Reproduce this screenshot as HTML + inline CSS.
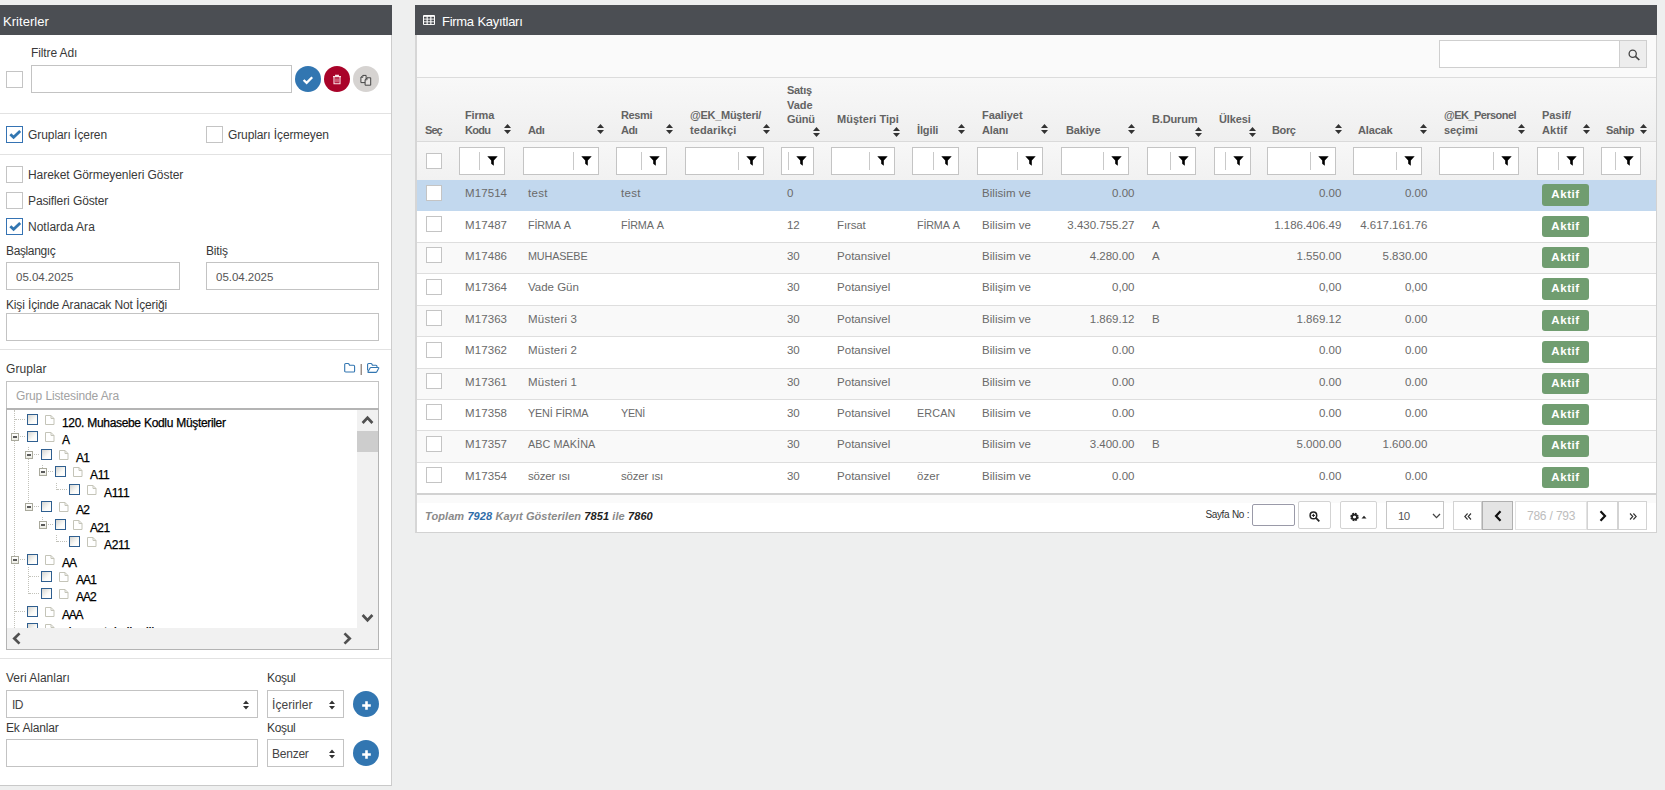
<!DOCTYPE html><html lang="tr"><head><meta charset="utf-8"><title>Firma Kayıtları</title><style>
*{box-sizing:border-box;margin:0;padding:0}
html,body{width:1665px;height:790px;overflow:hidden}
body{background:#eeefef;font-family:"Liberation Sans",sans-serif;font-size:12px;color:#393939;position:relative}
.abs{position:absolute}
.t{position:absolute;white-space:nowrap;line-height:16px;font-size:12px;color:#393939}
.panel{position:absolute;background:#fff}
.hdr{position:absolute;background:#4b4e53;height:30px;color:#fff}
.inp{position:absolute;background:#fff;border:1px solid #c3c3c3}
.cb{position:absolute;width:17px;height:17px;background:#fff;border:1px solid #c4c4c4}
.cb.s{width:16px;height:16px}
.cb.on{border-color:#3573b3;height:16.500px}
.hr{position:absolute;height:1px;background:#e2e2e2}
.circ{position:absolute;width:26px;height:26px;border-radius:13px}
.th{position:absolute;white-space:nowrap;font-weight:bold;font-size:11px;line-height:15px;color:#636363}
.td{position:absolute;white-space:nowrap;font-size:11.5px;line-height:16px;color:#6a6a6a}
.tdr{text-align:right}
.fb{position:absolute;height:28px;top:147px;background:#fff;border:1px solid #c4c4c4}
.fb i{position:absolute;top:4px;bottom:4px;width:1px;background:#c9c9c9;right:24px}
.fb svg{position:absolute;right:6px;top:8px}
.row{position:absolute;left:417px;width:1239px}
.akt{position:absolute;left:1542px;width:47px;height:22px;background:#709d70;border-radius:3px;color:#fff;font-weight:bold;font-size:11.500px;line-height:21.500px;text-align:center;letter-spacing:.55px}
.tree{position:absolute;white-space:nowrap;font-size:12px;line-height:14px;color:#000;-webkit-text-stroke:.25px #000}
.tcb{position:absolute;width:11px;height:11px;border:1px solid #2f5f90;background:linear-gradient(135deg,#d4d4d0,#fbfbf8 60%,#fff)}
.btn{position:absolute;background:#fff;border:1px solid #d3d3d3}
</style></head><body>
<div class="panel" style="left:0;top:5px;width:392px;height:781px;border-right:1px solid #cdcdcd;border-bottom:1px solid #c9c9c9"></div>
<div class="hdr" style="left:0;top:5px;width:392px"></div>
<div class="t" style="left:3px;top:14px;color:#fff;font-size:13px;letter-spacing:0.04px;">Kriterler</div>
<div class="t" style="left:31px;top:45px;letter-spacing:-0.12px;word-spacing:0.12px;">Filtre Adı</div>
<div class="cb" style="left:6px;top:71px"></div>
<div class="inp" style="left:31px;top:65px;width:261px;height:28px"></div>
<div class="circ" style="left:295px;top:66px;background:#3276b1"><svg class="abs" style="left:7px;top:9px" width="12" height="10" viewBox="0 0 12 10"><path d="M1.6 5 L4.6 7.8 L10.2 2.2" fill="none" stroke="#fff" stroke-width="2.3"/></svg></div>
<div class="circ" style="left:324px;top:66px;background:#a90329"><svg class="abs" style="left:8px;top:8px" width="10" height="11" viewBox="0 0 10 11"><path d="M1 2.6h8 M3.6 2.4v-1h2.8v1 M2 3.2v6.6h6v-6.6" fill="none" stroke="#fbe3e8" stroke-width="1.1"/><path d="M4 4.4v4M6 4.4v4" stroke="#f3b6c2" stroke-width="1"/></svg></div>
<div class="circ" style="left:353px;top:66px;background:#d6d3d1"><svg class="abs" style="left:7px;top:8px" width="12" height="12" viewBox="0 0 12 12"><path d="M0.9 3.400 l2-2 h3.200 v7.200 h-5.200z" fill="#e6e3e1" stroke="#444" stroke-width="1"/><path d="M5.100 5.800 l2-2 h3.600 v7.400 h-5.600z" fill="#e6e3e1" stroke="#444" stroke-width="1"/><path d="M2.900 1.400v2h-2 M7.100 3.800v2h-2" fill="none" stroke="#444" stroke-width=".8"/></svg></div>
<div class="hr" style="left:0;top:113px;width:391px"></div>
<div class="cb on" style="left:6px;top:126px"><svg class="abs" style="left:1px;top:2px" width="14" height="11" viewBox="0 0 14 11"><path d="M2.300 5.200 L5.600 8.300 L12.200 2" fill="none" stroke="#3276b1" stroke-width="2.800"/></svg></div>
<div class="t" style="left:28px;top:127px;letter-spacing:-0.07px;word-spacing:0.07px;">Grupları İçeren</div>
<div class="cb" style="left:206px;top:126px"></div>
<div class="t" style="left:228px;top:127px;letter-spacing:-0.11px;word-spacing:0.11px;">Grupları İçermeyen</div>
<div class="hr" style="left:0;top:154px;width:391px"></div>
<div class="cb" style="left:6px;top:166px"></div>
<div class="t" style="left:28px;top:167px;letter-spacing:-0.06px;word-spacing:0.06px;">Hareket Görmeyenleri Göster</div>
<div class="cb" style="left:6px;top:192px"></div>
<div class="t" style="left:28px;top:193px;letter-spacing:-0.12px;word-spacing:0.12px;">Pasifleri Göster</div>
<div class="cb on" style="left:6px;top:218px"><svg class="abs" style="left:1px;top:2px" width="14" height="11" viewBox="0 0 14 11"><path d="M2.300 5.200 L5.600 8.300 L12.200 2" fill="none" stroke="#3276b1" stroke-width="2.800"/></svg></div>
<div class="t" style="left:28px;top:219px;letter-spacing:0.01px;word-spacing:-0.01px;">Notlarda Ara</div>
<div class="t" style="left:6px;top:243px;letter-spacing:-0.37px;">Başlangıç</div>
<div class="t" style="left:206px;top:243px;letter-spacing:-0.17px;">Bitiş</div>
<div class="inp" style="left:6px;top:262px;width:174px;height:28px"></div>
<div class="t" style="left:16px;top:269px;color:#555;font-size:11.5px;letter-spacing:-0.02px;">05.04.2025</div>
<div class="inp" style="left:206px;top:262px;width:173px;height:28px"></div>
<div class="t" style="left:216px;top:269px;color:#555;font-size:11.5px;letter-spacing:-0.02px;">05.04.2025</div>
<div class="t" style="left:6px;top:297px;letter-spacing:-0.16px;word-spacing:0.16px;">Kişi İçinde Aranacak Not İçeriği</div>
<div class="inp" style="left:6px;top:313px;width:373px;height:28px"></div>
<div class="hr" style="left:0;top:349px;width:391px"></div>
<div class="t" style="left:6px;top:361px;letter-spacing:0.07px;">Gruplar</div>
<svg class="abs" style="left:344px;top:362px" width="36" height="14" viewBox="0 0 36 14"><path d="M0.7 2.6 q0-1.1 1.1-1.1 h2.2 q.8 0 1.1 .8 l.4 1 h4 q1.1 0 1.1 1.1 v4.5 q0 1.1-1.1 1.1 h-7.700 q-1.1 0-1.1-1.100z" fill="none" stroke="#3276b1" stroke-width="1.1"/><path d="M17.2 2 v11" stroke="#7a6a60" stroke-width="1.1"/><path d="M23.6 8.600 v-6 q0-1.100 1.100-1.100 h2.200 q.8 0 1.100 .8 l.4 1 h3.500 q1.100 0 1.100 1.100 v1" fill="none" stroke="#3276b1" stroke-width="1.100"/><path d="M23.900 9.800 l2.200-3.800 q.3-.5 .9-.5 h7.200 q.9 0 .5 .8 l-2 3.600 q-.3.500-.9.500 h-7.400 q-.9 0-.5-.6z" fill="none" stroke="#3276b1" stroke-width="1.100"/></svg>
<div class="inp" style="left:6px;top:381px;width:373px;height:28px"></div>
<div class="t" style="left:16px;top:388px;color:#a2a2a2;letter-spacing:-0.14px;word-spacing:0.14px;">Grup Listesinde Ara</div>
<div class="abs" style="left:6px;top:408px;width:373px;height:242px;border:1px solid #b4b4b4;border-top-width:2px;background:#fff;overflow:hidden">
<div class="abs" style="left:7px;top:0px;width:0;height:230px;border-left:1px dotted #c2c2ba"></div>
<div class="abs" style="left:21px;top:37px;width:0;height:55px;border-left:1px dotted #c2c2ba"></div>
<div class="abs" style="left:35px;top:55px;width:0;height:3px;border-left:1px dotted #c2c2ba"></div>
<div class="abs" style="left:49px;top:73px;width:0;height:7px;border-left:1px dotted #c2c2ba"></div>
<div class="abs" style="left:35px;top:107px;width:0;height:3px;border-left:1px dotted #c2c2ba"></div>
<div class="abs" style="left:49px;top:125px;width:0;height:7px;border-left:1px dotted #c2c2ba"></div>
<div class="abs" style="left:21px;top:157px;width:0;height:27px;border-left:1px dotted #c2c2ba"></div>
<div class="tcb" style="left:20px;top:4px"></div>
<svg class="abs" style="left:38px;top:5px" width="10" height="10" viewBox="0 0 10 10"><path d="M0.500 0.500 h5.500 l3 3 v6 h-8.500z" fill="#fff" stroke="#c4c4b8" stroke-width="1"/><path d="M6 0.500 v3 h3" fill="none" stroke="#c4c4b8" stroke-width="1"/></svg>
<div class="tree" style="left:55px;top:6px;letter-spacing:-0.34px;word-spacing:0.34px;">120. Muhasebe Kodlu Müşteriler</div>
<div class="abs" style="left:8px;top:9px;width:10px;height:0;border-top:1px dotted #c2c2ba"></div>
<div class="tcb" style="left:20px;top:21px"></div>
<svg class="abs" style="left:38px;top:22px" width="10" height="10" viewBox="0 0 10 10"><path d="M0.500 0.500 h5.500 l3 3 v6 h-8.500z" fill="#fff" stroke="#c4c4b8" stroke-width="1"/><path d="M6 0.500 v3 h3" fill="none" stroke="#c4c4b8" stroke-width="1"/></svg>
<div class="tree" style="left:55px;top:23px;letter-spacing:-0.62px;">A</div>
<div class="abs" style="left:4px;top:23px;width:8px;height:8px;border:1px solid #a9a99c;background:linear-gradient(#fff,#ecece4)"><div class="abs" style="left:1px;top:2px;width:4px;height:2px;background:#5a5a5a"></div></div>
<div class="abs" style="left:13px;top:26px;width:5px;height:0;border-top:1px dotted #c2c2ba"></div>
<div class="tcb" style="left:34px;top:39px"></div>
<svg class="abs" style="left:52px;top:40px" width="10" height="10" viewBox="0 0 10 10"><path d="M0.500 0.500 h5.500 l3 3 v6 h-8.500z" fill="#fff" stroke="#c4c4b8" stroke-width="1"/><path d="M6 0.500 v3 h3" fill="none" stroke="#c4c4b8" stroke-width="1"/></svg>
<div class="tree" style="left:69px;top:41px;letter-spacing:-0.84px;">A1</div>
<div class="abs" style="left:18px;top:41px;width:8px;height:8px;border:1px solid #a9a99c;background:linear-gradient(#fff,#ecece4)"><div class="abs" style="left:1px;top:2px;width:4px;height:2px;background:#5a5a5a"></div></div>
<div class="abs" style="left:27px;top:44px;width:5px;height:0;border-top:1px dotted #c2c2ba"></div>
<div class="tcb" style="left:48px;top:56px"></div>
<svg class="abs" style="left:66px;top:57px" width="10" height="10" viewBox="0 0 10 10"><path d="M0.500 0.500 h5.500 l3 3 v6 h-8.500z" fill="#fff" stroke="#c4c4b8" stroke-width="1"/><path d="M6 0.500 v3 h3" fill="none" stroke="#c4c4b8" stroke-width="1"/></svg>
<div class="tree" style="left:83px;top:58px;letter-spacing:-0.36px;">A11</div>
<div class="abs" style="left:32px;top:58px;width:8px;height:8px;border:1px solid #a9a99c;background:linear-gradient(#fff,#ecece4)"><div class="abs" style="left:1px;top:2px;width:4px;height:2px;background:#5a5a5a"></div></div>
<div class="abs" style="left:41px;top:61px;width:5px;height:0;border-top:1px dotted #c2c2ba"></div>
<div class="tcb" style="left:62px;top:74px"></div>
<svg class="abs" style="left:80px;top:75px" width="10" height="10" viewBox="0 0 10 10"><path d="M0.500 0.500 h5.500 l3 3 v6 h-8.500z" fill="#fff" stroke="#c4c4b8" stroke-width="1"/><path d="M6 0.500 v3 h3" fill="none" stroke="#c4c4b8" stroke-width="1"/></svg>
<div class="tree" style="left:97px;top:76px;letter-spacing:-0.21px;">A111</div>
<div class="abs" style="left:50px;top:79px;width:10px;height:0;border-top:1px dotted #c2c2ba"></div>
<div class="tcb" style="left:34px;top:91px"></div>
<svg class="abs" style="left:52px;top:92px" width="10" height="10" viewBox="0 0 10 10"><path d="M0.500 0.500 h5.500 l3 3 v6 h-8.500z" fill="#fff" stroke="#c4c4b8" stroke-width="1"/><path d="M6 0.500 v3 h3" fill="none" stroke="#c4c4b8" stroke-width="1"/></svg>
<div class="tree" style="left:69px;top:93px;letter-spacing:-0.84px;">A2</div>
<div class="abs" style="left:18px;top:93px;width:8px;height:8px;border:1px solid #a9a99c;background:linear-gradient(#fff,#ecece4)"><div class="abs" style="left:1px;top:2px;width:4px;height:2px;background:#5a5a5a"></div></div>
<div class="abs" style="left:27px;top:96px;width:5px;height:0;border-top:1px dotted #c2c2ba"></div>
<div class="tcb" style="left:48px;top:109px"></div>
<svg class="abs" style="left:66px;top:110px" width="10" height="10" viewBox="0 0 10 10"><path d="M0.500 0.500 h5.500 l3 3 v6 h-8.500z" fill="#fff" stroke="#c4c4b8" stroke-width="1"/><path d="M6 0.500 v3 h3" fill="none" stroke="#c4c4b8" stroke-width="1"/></svg>
<div class="tree" style="left:83px;top:111px;letter-spacing:-0.65px;">A21</div>
<div class="abs" style="left:32px;top:111px;width:8px;height:8px;border:1px solid #a9a99c;background:linear-gradient(#fff,#ecece4)"><div class="abs" style="left:1px;top:2px;width:4px;height:2px;background:#5a5a5a"></div></div>
<div class="abs" style="left:41px;top:114px;width:5px;height:0;border-top:1px dotted #c2c2ba"></div>
<div class="tcb" style="left:62px;top:126px"></div>
<svg class="abs" style="left:80px;top:127px" width="10" height="10" viewBox="0 0 10 10"><path d="M0.500 0.500 h5.500 l3 3 v6 h-8.500z" fill="#fff" stroke="#c4c4b8" stroke-width="1"/><path d="M6 0.500 v3 h3" fill="none" stroke="#c4c4b8" stroke-width="1"/></svg>
<div class="tree" style="left:97px;top:128px;letter-spacing:-0.31px;">A211</div>
<div class="abs" style="left:50px;top:131px;width:10px;height:0;border-top:1px dotted #c2c2ba"></div>
<div class="tcb" style="left:20px;top:144px"></div>
<svg class="abs" style="left:38px;top:145px" width="10" height="10" viewBox="0 0 10 10"><path d="M0.500 0.500 h5.500 l3 3 v6 h-8.500z" fill="#fff" stroke="#c4c4b8" stroke-width="1"/><path d="M6 0.500 v3 h3" fill="none" stroke="#c4c4b8" stroke-width="1"/></svg>
<div class="tree" style="left:55px;top:146px;letter-spacing:-1.11px;">AA</div>
<div class="abs" style="left:4px;top:146px;width:8px;height:8px;border:1px solid #a9a99c;background:linear-gradient(#fff,#ecece4)"><div class="abs" style="left:1px;top:2px;width:4px;height:2px;background:#5a5a5a"></div></div>
<div class="abs" style="left:13px;top:149px;width:5px;height:0;border-top:1px dotted #c2c2ba"></div>
<div class="tcb" style="left:34px;top:161px"></div>
<svg class="abs" style="left:52px;top:162px" width="10" height="10" viewBox="0 0 10 10"><path d="M0.500 0.500 h5.500 l3 3 v6 h-8.500z" fill="#fff" stroke="#c4c4b8" stroke-width="1"/><path d="M6 0.500 v3 h3" fill="none" stroke="#c4c4b8" stroke-width="1"/></svg>
<div class="tree" style="left:69px;top:163px;letter-spacing:-0.90px;">AA1</div>
<div class="abs" style="left:22px;top:166px;width:10px;height:0;border-top:1px dotted #c2c2ba"></div>
<div class="tcb" style="left:34px;top:178px"></div>
<svg class="abs" style="left:52px;top:179px" width="10" height="10" viewBox="0 0 10 10"><path d="M0.500 0.500 h5.500 l3 3 v6 h-8.500z" fill="#fff" stroke="#c4c4b8" stroke-width="1"/><path d="M6 0.500 v3 h3" fill="none" stroke="#c4c4b8" stroke-width="1"/></svg>
<div class="tree" style="left:69px;top:180px;letter-spacing:-0.96px;">AA2</div>
<div class="abs" style="left:22px;top:183px;width:10px;height:0;border-top:1px dotted #c2c2ba"></div>
<div class="tcb" style="left:20px;top:196px"></div>
<svg class="abs" style="left:38px;top:197px" width="10" height="10" viewBox="0 0 10 10"><path d="M0.500 0.500 h5.500 l3 3 v6 h-8.500z" fill="#fff" stroke="#c4c4b8" stroke-width="1"/><path d="M6 0.500 v3 h3" fill="none" stroke="#c4c4b8" stroke-width="1"/></svg>
<div class="tree" style="left:55px;top:198px;letter-spacing:-1.21px;">AAA</div>
<div class="abs" style="left:8px;top:201px;width:10px;height:0;border-top:1px dotted #c2c2ba"></div>
<div class="tcb" style="left:20px;top:213px"></div>
<svg class="abs" style="left:38px;top:214px" width="10" height="10" viewBox="0 0 10 10"><path d="M0.500 0.500 h5.500 l3 3 v6 h-8.500z" fill="#fff" stroke="#c4c4b8" stroke-width="1"/><path d="M6 0.500 v3 h3" fill="none" stroke="#c4c4b8" stroke-width="1"/></svg>
<div class="tree" style="left:55px;top:215px;">alacagı tahsil edilemeyen</div>
<div class="abs" style="left:8px;top:218px;width:10px;height:0;border-top:1px dotted #c2c2ba"></div>
<div class="abs" style="left:350px;top:0;width:22px;height:218px;background:#f1f1f1"></div>
<div class="abs" style="left:350px;top:21px;width:21px;height:21px;background:#cdcdcd"></div>
<div class="abs" style="left:0;top:218px;width:372px;height:22px;background:#f1f1f1"></div>
<svg class="abs" style="left:354px;top:4px" width="13" height="11" viewBox="0 0 13 11"><path d="M1.600 9 L6.500 3.800 L11.400 9" fill="none" stroke="#505050" stroke-width="2.700"/></svg>
<svg class="abs" style="left:354px;top:203px" width="13" height="11" viewBox="0 0 13 11"><path d="M1.600 2 L6.500 7.200 L11.400 2" fill="none" stroke="#505050" stroke-width="2.700"/></svg>
<svg class="abs" style="left:4px;top:222px" width="11" height="13" viewBox="0 0 11 13"><path d="M8.500 1.400 L3.300 6.500 L8.500 11.600" fill="none" stroke="#505050" stroke-width="2.700"/></svg>
<svg class="abs" style="left:335px;top:222px" width="11" height="13" viewBox="0 0 11 13"><path d="M2.500 1.400 L7.700 6.500 L2.500 11.600" fill="none" stroke="#505050" stroke-width="2.700"/></svg>
</div>
<div class="hr" style="left:0;top:658px;width:391px"></div>
<div class="t" style="left:6px;top:670px;letter-spacing:-0.01px;word-spacing:0.01px;">Veri Alanları</div>
<div class="t" style="left:267px;top:670px;letter-spacing:-0.35px;">Koşul</div>
<div class="inp" style="left:6px;top:690px;width:252px;height:28px"><svg class="abs" style="right:8px;top:8.500px" width="6" height="10" viewBox="0 0 6 10"><path d="M0 4 L3 0.500 L6 4z M0 6 L3 9.500 L6 6z" fill="#333"/></svg></div>
<div class="t" style="left:12px;top:697px;color:#444;letter-spacing:-0.55px;">ID</div>
<div class="inp" style="left:267px;top:690px;width:77px;height:28px"><svg class="abs" style="right:8px;top:8.500px" width="6" height="10" viewBox="0 0 6 10"><path d="M0 4 L3 0.500 L6 4z M0 6 L3 9.500 L6 6z" fill="#333"/></svg></div>
<div class="t" style="left:272px;top:697px;color:#444;letter-spacing:0.05px;">İçerirler</div>
<div class="circ" style="left:353px;top:691px;background:#3276b1"><svg class="abs" style="left:9px;top:9.500px" width="9" height="9" viewBox="0 0 9 9"><path d="M4.500 0.200v8.600M0.200 4.500h8.600" stroke="#fff" stroke-width="2.600"/></svg></div>
<div class="t" style="left:6px;top:720px;letter-spacing:-0.15px;word-spacing:0.15px;">Ek Alanlar</div>
<div class="t" style="left:267px;top:720px;letter-spacing:-0.35px;">Koşul</div>
<div class="inp" style="left:6px;top:739px;width:252px;height:28px"></div>
<div class="inp" style="left:267px;top:739px;width:77px;height:28px"><svg class="abs" style="right:8px;top:8.500px" width="6" height="10" viewBox="0 0 6 10"><path d="M0 4 L3 0.500 L6 4z M0 6 L3 9.500 L6 6z" fill="#333"/></svg></div>
<div class="t" style="left:272px;top:746px;color:#444;letter-spacing:-0.24px;">Benzer</div>
<div class="circ" style="left:353px;top:740px;background:#3276b1"><svg class="abs" style="left:9px;top:9.500px" width="9" height="9" viewBox="0 0 9 9"><path d="M4.500 0.200v8.600M0.200 4.500h8.600" stroke="#fff" stroke-width="2.600"/></svg></div>
<div class="panel" style="left:415px;top:5px;width:1242px;height:528px;border:1px solid #d2d2d2;border-left:2px solid #d6d6d6"></div>
<div class="hdr" style="left:415px;top:5px;width:1242px"></div>
<svg class="abs" style="left:423px;top:15px" width="12" height="10" viewBox="0 0 12 11" preserveAspectRatio="none"><rect x="0" y="0" width="12" height="11" rx="1" fill="#fff"/><g fill="#4b4e53"><rect x="1" y="2" width="2.600" height="2"/><rect x="4.700" y="2" width="2.600" height="2"/><rect x="8.400" y="2" width="2.600" height="2"/><rect x="1" y="5" width="2.600" height="2"/><rect x="4.700" y="5" width="2.600" height="2"/><rect x="8.400" y="5" width="2.600" height="2"/><rect x="1" y="8" width="2.600" height="2"/><rect x="4.700" y="8" width="2.600" height="2"/><rect x="8.400" y="8" width="2.600" height="2"/></g></svg>
<div class="t" style="left:442px;top:14px;color:#fff;font-size:13px;letter-spacing:-0.29px;word-spacing:0.29px;">Firma Kayıtları</div>
<div class="abs" style="left:417px;top:35px;width:1239px;height:43px;background:#fafafa;border-bottom:1px solid #dcdcdc"></div>
<div class="inp" style="left:1439px;top:40px;width:181px;height:28px;border-color:#cfcfcf"></div>
<div class="abs" style="left:1619px;top:40px;width:28px;height:28px;background:#ededed;border:1px solid #cfcfcf"><svg class="abs" style="left:8px;top:8px" width="13" height="13" viewBox="0 0 13 13"><circle cx="4.700" cy="4.700" r="3.600" fill="none" stroke="#444" stroke-width="1.300"/><path d="M7.400 7.400 L11.300 11" stroke="#444" stroke-width="1.700"/></svg></div>
<div class="abs" style="left:417px;top:78px;width:1239px;height:64px;background:linear-gradient(#f8f8f8,#efefef);border-bottom:1px solid #dadada"></div>
<div class="abs" style="left:417px;top:142px;width:1239px;height:38px;background:linear-gradient(#f7f7f7,#f1f1f1)"></div>
<div class="th" style="left:425px;top:123px;letter-spacing:-0.96px;">Seç</div>
<div class="th" style="left:465px;top:108px;letter-spacing:-0.17px;">Firma</div>
<div class="th" style="left:465px;top:123px;letter-spacing:-0.70px;">Kodu</div>
<div class="abs" style="left:504px;top:124px;width:7px;height:10px;line-height:0"><svg width="7" height="10" viewBox="0 0 7 10"><path d="M0 4 L3.500 0 L7 4z M0 6 L3.500 10 L7 6z" fill="#333"/></svg></div>
<div class="th" style="left:528px;top:123px;letter-spacing:-0.41px;">Adı</div>
<div class="abs" style="left:597px;top:124px;width:7px;height:10px;line-height:0"><svg width="7" height="10" viewBox="0 0 7 10"><path d="M0 4 L3.500 0 L7 4z M0 6 L3.500 10 L7 6z" fill="#333"/></svg></div>
<div class="th" style="left:621px;top:108px;letter-spacing:-0.39px;">Resmi</div>
<div class="th" style="left:621px;top:123px;letter-spacing:-0.41px;">Adı</div>
<div class="abs" style="left:666px;top:124px;width:7px;height:10px;line-height:0"><svg width="7" height="10" viewBox="0 0 7 10"><path d="M0 4 L3.500 0 L7 4z M0 6 L3.500 10 L7 6z" fill="#333"/></svg></div>
<div class="th" style="left:690px;top:108px;letter-spacing:-0.28px;">@EK_Müşteri/</div>
<div class="th" style="left:690px;top:123px;letter-spacing:0.12px;">tedarikçi</div>
<div class="abs" style="left:763px;top:124px;width:7px;height:10px;line-height:0"><svg width="7" height="10" viewBox="0 0 7 10"><path d="M0 4 L3.500 0 L7 4z M0 6 L3.500 10 L7 6z" fill="#333"/></svg></div>
<div class="th" style="left:787px;top:83.0px;letter-spacing:-0.30px;">Satış</div>
<div class="th" style="left:787px;top:97.5px;letter-spacing:-0.02px;">Vade</div>
<div class="th" style="left:787px;top:112.0px;letter-spacing:-0.23px;">Günü</div>
<div class="abs" style="left:813px;top:127px;width:7px;height:10px;line-height:0"><svg width="7" height="10" viewBox="0 0 7 10"><path d="M0 4 L3.500 0 L7 4z M0 6 L3.500 10 L7 6z" fill="#333"/></svg></div>
<div class="th" style="left:837px;top:112px;letter-spacing:0.04px;word-spacing:-0.04px;">Müşteri Tipi</div>
<div class="abs" style="left:893px;top:127px;width:7px;height:10px;line-height:0"><svg width="7" height="10" viewBox="0 0 7 10"><path d="M0 4 L3.500 0 L7 4z M0 6 L3.500 10 L7 6z" fill="#333"/></svg></div>
<div class="th" style="left:917px;top:123px;letter-spacing:-0.12px;">İlgili</div>
<div class="abs" style="left:958px;top:124px;width:7px;height:10px;line-height:0"><svg width="7" height="10" viewBox="0 0 7 10"><path d="M0 4 L3.500 0 L7 4z M0 6 L3.500 10 L7 6z" fill="#333"/></svg></div>
<div class="th" style="left:982px;top:108px;letter-spacing:-0.06px;">Faaliyet</div>
<div class="th" style="left:982px;top:123px;letter-spacing:-0.16px;">Alanı</div>
<div class="abs" style="left:1041px;top:124px;width:7px;height:10px;line-height:0"><svg width="7" height="10" viewBox="0 0 7 10"><path d="M0 4 L3.500 0 L7 4z M0 6 L3.500 10 L7 6z" fill="#333"/></svg></div>
<div class="th" style="left:1066px;top:123px;letter-spacing:-0.18px;">Bakiye</div>
<div class="abs" style="left:1128px;top:124px;width:7px;height:10px;line-height:0"><svg width="7" height="10" viewBox="0 0 7 10"><path d="M0 4 L3.500 0 L7 4z M0 6 L3.500 10 L7 6z" fill="#333"/></svg></div>
<div class="th" style="left:1152px;top:112px;letter-spacing:-0.16px;">B.Durum</div>
<div class="abs" style="left:1195px;top:127px;width:7px;height:10px;line-height:0"><svg width="7" height="10" viewBox="0 0 7 10"><path d="M0 4 L3.500 0 L7 4z M0 6 L3.500 10 L7 6z" fill="#333"/></svg></div>
<div class="th" style="left:1219px;top:112px;letter-spacing:-0.12px;">Ülkesi</div>
<div class="abs" style="left:1249px;top:127px;width:7px;height:10px;line-height:0"><svg width="7" height="10" viewBox="0 0 7 10"><path d="M0 4 L3.500 0 L7 4z M0 6 L3.500 10 L7 6z" fill="#333"/></svg></div>
<div class="th" style="left:1272px;top:123px;letter-spacing:-0.39px;">Borç</div>
<div class="abs" style="left:1335px;top:124px;width:7px;height:10px;line-height:0"><svg width="7" height="10" viewBox="0 0 7 10"><path d="M0 4 L3.500 0 L7 4z M0 6 L3.500 10 L7 6z" fill="#333"/></svg></div>
<div class="th" style="left:1358px;top:123px;letter-spacing:-0.16px;">Alacak</div>
<div class="abs" style="left:1420px;top:124px;width:7px;height:10px;line-height:0"><svg width="7" height="10" viewBox="0 0 7 10"><path d="M0 4 L3.500 0 L7 4z M0 6 L3.500 10 L7 6z" fill="#333"/></svg></div>
<div class="th" style="left:1444px;top:108px;letter-spacing:-0.55px;">@EK_Personel</div>
<div class="th" style="left:1444px;top:123px;letter-spacing:-0.09px;">seçimi</div>
<div class="abs" style="left:1518px;top:124px;width:7px;height:10px;line-height:0"><svg width="7" height="10" viewBox="0 0 7 10"><path d="M0 4 L3.500 0 L7 4z M0 6 L3.500 10 L7 6z" fill="#333"/></svg></div>
<div class="th" style="left:1542px;top:108px;letter-spacing:-0.04px;">Pasif/</div>
<div class="th" style="left:1542px;top:123px;letter-spacing:0.17px;">Aktif</div>
<div class="abs" style="left:1583px;top:124px;width:7px;height:10px;line-height:0"><svg width="7" height="10" viewBox="0 0 7 10"><path d="M0 4 L3.500 0 L7 4z M0 6 L3.500 10 L7 6z" fill="#333"/></svg></div>
<div class="th" style="left:1606px;top:123px;letter-spacing:-0.37px;">Sahip</div>
<div class="abs" style="left:1640px;top:124px;width:7px;height:10px;line-height:0"><svg width="7" height="10" viewBox="0 0 7 10"><path d="M0 4 L3.500 0 L7 4z M0 6 L3.500 10 L7 6z" fill="#333"/></svg></div>
<div class="cb s" style="left:426px;top:153px"></div>
<div class="fb" style="left:459px;width:46px"><i></i><svg width="11" height="10" viewBox="0 0 11 10"><path d="M0.300 0.200 h10.400 l-3.900 4.300 v5.300 l-2.600-2 v-3.300z" fill="#000"/></svg></div>
<div class="fb" style="left:523px;width:76px"><i></i><svg width="11" height="10" viewBox="0 0 11 10"><path d="M0.300 0.200 h10.400 l-3.900 4.300 v5.300 l-2.600-2 v-3.300z" fill="#000"/></svg></div>
<div class="fb" style="left:616px;width:51px"><i></i><svg width="11" height="10" viewBox="0 0 11 10"><path d="M0.300 0.200 h10.400 l-3.900 4.300 v5.300 l-2.600-2 v-3.300z" fill="#000"/></svg></div>
<div class="fb" style="left:685px;width:79px"><i></i><svg width="11" height="10" viewBox="0 0 11 10"><path d="M0.300 0.200 h10.400 l-3.900 4.300 v5.300 l-2.600-2 v-3.300z" fill="#000"/></svg></div>
<div class="fb" style="left:781px;width:33px"><i></i><svg width="11" height="10" viewBox="0 0 11 10"><path d="M0.300 0.200 h10.400 l-3.900 4.300 v5.300 l-2.600-2 v-3.300z" fill="#000"/></svg></div>
<div class="fb" style="left:831px;width:64px"><i></i><svg width="11" height="10" viewBox="0 0 11 10"><path d="M0.300 0.200 h10.400 l-3.900 4.300 v5.300 l-2.600-2 v-3.300z" fill="#000"/></svg></div>
<div class="fb" style="left:912px;width:47px"><i></i><svg width="11" height="10" viewBox="0 0 11 10"><path d="M0.300 0.200 h10.400 l-3.900 4.300 v5.300 l-2.600-2 v-3.300z" fill="#000"/></svg></div>
<div class="fb" style="left:977px;width:66px"><i></i><svg width="11" height="10" viewBox="0 0 11 10"><path d="M0.300 0.200 h10.400 l-3.900 4.300 v5.300 l-2.600-2 v-3.300z" fill="#000"/></svg></div>
<div class="fb" style="left:1061px;width:68px"><i></i><svg width="11" height="10" viewBox="0 0 11 10"><path d="M0.300 0.200 h10.400 l-3.900 4.300 v5.300 l-2.600-2 v-3.300z" fill="#000"/></svg></div>
<div class="fb" style="left:1147px;width:49px"><i></i><svg width="11" height="10" viewBox="0 0 11 10"><path d="M0.300 0.200 h10.400 l-3.900 4.300 v5.300 l-2.600-2 v-3.300z" fill="#000"/></svg></div>
<div class="fb" style="left:1214px;width:37px"><i></i><svg width="11" height="10" viewBox="0 0 11 10"><path d="M0.300 0.200 h10.400 l-3.900 4.300 v5.300 l-2.600-2 v-3.300z" fill="#000"/></svg></div>
<div class="fb" style="left:1267px;width:69px"><i></i><svg width="11" height="10" viewBox="0 0 11 10"><path d="M0.300 0.200 h10.400 l-3.900 4.300 v5.300 l-2.600-2 v-3.300z" fill="#000"/></svg></div>
<div class="fb" style="left:1353px;width:69px"><i></i><svg width="11" height="10" viewBox="0 0 11 10"><path d="M0.300 0.200 h10.400 l-3.900 4.300 v5.300 l-2.600-2 v-3.300z" fill="#000"/></svg></div>
<div class="fb" style="left:1439px;width:80px"><i></i><svg width="11" height="10" viewBox="0 0 11 10"><path d="M0.300 0.200 h10.400 l-3.900 4.300 v5.300 l-2.600-2 v-3.300z" fill="#000"/></svg></div>
<div class="fb" style="left:1537px;width:47px"><i></i><svg width="11" height="10" viewBox="0 0 11 10"><path d="M0.300 0.200 h10.400 l-3.900 4.300 v5.300 l-2.600-2 v-3.300z" fill="#000"/></svg></div>
<div class="fb" style="left:1601px;width:40px"><i></i><svg width="11" height="10" viewBox="0 0 11 10"><path d="M0.300 0.200 h10.400 l-3.900 4.300 v5.300 l-2.600-2 v-3.300z" fill="#000"/></svg></div>
<div class="row" style="top:180px;height:31px;background:#c2d8ee;"></div>
<div class="cb s" style="left:426px;top:184.5px"></div>
<div class="td" style="left:465px;top:185.2px;letter-spacing:0.09px;">M17514</div>
<div class="td" style="left:528px;top:185.2px;letter-spacing:0.31px;">test</div>
<div class="td" style="left:621px;top:185.2px;letter-spacing:0.31px;">test</div>
<div class="td" style="left:787px;top:185.2px;">0</div>
<div class="td" style="left:982px;top:185.2px;letter-spacing:0.04px;word-spacing:-0.04px;">Bilisim ve</div>
<div class="td tdr" style="left:1014.5px;width:120px;top:185.2px">0.00</div>
<div class="td tdr" style="left:1221.3px;width:120px;top:185.2px">0.00</div>
<div class="td tdr" style="left:1307.3px;width:120px;top:185.2px">0.00</div>
<div class="akt" style="top:184.1px;height:21.500px">Aktif</div>
<div class="row" style="top:211px;height:31px;background:#fff;"></div>
<div class="cb s" style="left:426px;top:215.9px"></div>
<div class="td" style="left:465px;top:216.6px;letter-spacing:0.09px;">M17487</div>
<div class="td" style="left:528px;top:216.6px;font-size:10.800px;word-spacing:1.500px;letter-spacing:-0.18px;">FİRMA A</div>
<div class="td" style="left:621px;top:216.6px;font-size:10.800px;word-spacing:1.500px;letter-spacing:-0.18px;">FİRMA A</div>
<div class="td" style="left:787px;top:216.6px;letter-spacing:-0.05px;">12</div>
<div class="td" style="left:837px;top:216.6px;letter-spacing:-0.13px;">Fırsat</div>
<div class="td" style="left:917px;top:216.6px;font-size:10.800px;word-spacing:1.500px;letter-spacing:-0.18px;">FİRMA A</div>
<div class="td" style="left:982px;top:216.6px;letter-spacing:0.04px;word-spacing:-0.04px;">Bilisim ve</div>
<div class="td" style="left:1152px;top:216.6px;letter-spacing:-0.87px;">A</div>
<div class="td tdr" style="left:1014.5px;width:120px;top:216.6px">3.430.755.27</div>
<div class="td tdr" style="left:1221.3px;width:120px;top:216.6px">1.186.406.49</div>
<div class="td tdr" style="left:1307.3px;width:120px;top:216.6px">4.617.161.76</div>
<div class="akt" style="top:215.5px;height:21.500px">Aktif</div>
<div class="row" style="top:242px;height:31px;background:#f9f9f9;border-top:1px solid #dedede;"></div>
<div class="cb s" style="left:426px;top:247.3px"></div>
<div class="td" style="left:465px;top:248.0px;letter-spacing:0.09px;">M17486</div>
<div class="td" style="left:528px;top:248.0px;font-size:10.800px;letter-spacing:-0.14px;">MUHASEBE</div>
<div class="td" style="left:787px;top:248.0px;letter-spacing:-0.05px;">30</div>
<div class="td" style="left:837px;top:248.0px;letter-spacing:0.03px;">Potansivel</div>
<div class="td" style="left:982px;top:248.0px;letter-spacing:0.04px;word-spacing:-0.04px;">Bilisim ve</div>
<div class="td" style="left:1152px;top:248.0px;letter-spacing:-0.87px;">A</div>
<div class="td tdr" style="left:1014.5px;width:120px;top:248.0px">4.280.00</div>
<div class="td tdr" style="left:1221.3px;width:120px;top:248.0px">1.550.00</div>
<div class="td tdr" style="left:1307.3px;width:120px;top:248.0px">5.830.00</div>
<div class="akt" style="top:246.9px;height:21.500px">Aktif</div>
<div class="row" style="top:273px;height:32px;background:#fff;border-top:1px solid #dedede;"></div>
<div class="cb s" style="left:426px;top:278.7px"></div>
<div class="td" style="left:465px;top:279.4px;letter-spacing:0.09px;">M17364</div>
<div class="td" style="left:528px;top:279.4px;letter-spacing:-0.01px;word-spacing:0.01px;">Vade Gün</div>
<div class="td" style="left:787px;top:279.4px;letter-spacing:-0.05px;">30</div>
<div class="td" style="left:837px;top:279.4px;letter-spacing:0.03px;">Potansiyel</div>
<div class="td" style="left:982px;top:279.4px;letter-spacing:0.04px;word-spacing:-0.04px;">Bilişim ve</div>
<div class="td tdr" style="left:1014.5px;width:120px;top:279.4px">0,00</div>
<div class="td tdr" style="left:1221.3px;width:120px;top:279.4px">0,00</div>
<div class="td tdr" style="left:1307.3px;width:120px;top:279.4px">0,00</div>
<div class="akt" style="top:278.3px;height:21.500px">Aktif</div>
<div class="row" style="top:305px;height:31px;background:#f9f9f9;border-top:1px solid #dedede;"></div>
<div class="cb s" style="left:426px;top:310.1px"></div>
<div class="td" style="left:465px;top:310.8px;letter-spacing:0.09px;">M17363</div>
<div class="td" style="left:528px;top:310.8px;letter-spacing:0.23px;word-spacing:-0.23px;">Müsteri 3</div>
<div class="td" style="left:787px;top:310.8px;letter-spacing:-0.05px;">30</div>
<div class="td" style="left:837px;top:310.8px;letter-spacing:0.03px;">Potansivel</div>
<div class="td" style="left:982px;top:310.8px;letter-spacing:0.04px;word-spacing:-0.04px;">Bilisim ve</div>
<div class="td" style="left:1152px;top:310.8px;letter-spacing:-1.07px;">B</div>
<div class="td tdr" style="left:1014.5px;width:120px;top:310.8px">1.869.12</div>
<div class="td tdr" style="left:1221.3px;width:120px;top:310.8px">1.869.12</div>
<div class="td tdr" style="left:1307.3px;width:120px;top:310.8px">0.00</div>
<div class="akt" style="top:309.7px;height:21.500px">Aktif</div>
<div class="row" style="top:336px;height:32px;background:#fff;border-top:1px solid #dedede;"></div>
<div class="cb s" style="left:426px;top:341.5px"></div>
<div class="td" style="left:465px;top:342.2px;letter-spacing:0.09px;">M17362</div>
<div class="td" style="left:528px;top:342.2px;letter-spacing:0.23px;word-spacing:-0.23px;">Müsteri 2</div>
<div class="td" style="left:787px;top:342.2px;letter-spacing:-0.05px;">30</div>
<div class="td" style="left:837px;top:342.2px;letter-spacing:0.03px;">Potansivel</div>
<div class="td" style="left:982px;top:342.2px;letter-spacing:0.04px;word-spacing:-0.04px;">Bilisim ve</div>
<div class="td tdr" style="left:1014.5px;width:120px;top:342.2px">0.00</div>
<div class="td tdr" style="left:1221.3px;width:120px;top:342.2px">0.00</div>
<div class="td tdr" style="left:1307.3px;width:120px;top:342.2px">0.00</div>
<div class="akt" style="top:341.1px;height:21.500px">Aktif</div>
<div class="row" style="top:368px;height:31px;background:#f9f9f9;border-top:1px solid #dedede;"></div>
<div class="cb s" style="left:426px;top:372.9px"></div>
<div class="td" style="left:465px;top:373.6px;letter-spacing:0.09px;">M17361</div>
<div class="td" style="left:528px;top:373.6px;letter-spacing:0.23px;word-spacing:-0.23px;">Müsteri 1</div>
<div class="td" style="left:787px;top:373.6px;letter-spacing:-0.05px;">30</div>
<div class="td" style="left:837px;top:373.6px;letter-spacing:0.03px;">Potansivel</div>
<div class="td" style="left:982px;top:373.6px;letter-spacing:0.04px;word-spacing:-0.04px;">Bilisim ve</div>
<div class="td tdr" style="left:1014.5px;width:120px;top:373.6px">0.00</div>
<div class="td tdr" style="left:1221.3px;width:120px;top:373.6px">0.00</div>
<div class="td tdr" style="left:1307.3px;width:120px;top:373.6px">0.00</div>
<div class="akt" style="top:372.5px;height:21.500px">Aktif</div>
<div class="row" style="top:399px;height:31px;background:#fff;border-top:1px solid #dedede;"></div>
<div class="cb s" style="left:426px;top:404.3px"></div>
<div class="td" style="left:465px;top:405.0px;letter-spacing:0.09px;">M17358</div>
<div class="td" style="left:528px;top:405.0px;font-size:10.800px;letter-spacing:-0.17px;word-spacing:0.17px;">YENİ FİRMA</div>
<div class="td" style="left:621px;top:405.0px;font-size:10.800px;letter-spacing:-0.30px;">YENİ</div>
<div class="td" style="left:787px;top:405.0px;letter-spacing:-0.05px;">30</div>
<div class="td" style="left:837px;top:405.0px;letter-spacing:0.03px;">Potansivel</div>
<div class="td" style="left:917px;top:405.0px;font-size:10.800px;letter-spacing:0.14px;">ERCAN</div>
<div class="td" style="left:982px;top:405.0px;letter-spacing:0.04px;word-spacing:-0.04px;">Bilisim ve</div>
<div class="td tdr" style="left:1014.5px;width:120px;top:405.0px">0.00</div>
<div class="td tdr" style="left:1221.3px;width:120px;top:405.0px">0.00</div>
<div class="td tdr" style="left:1307.3px;width:120px;top:405.0px">0.00</div>
<div class="akt" style="top:403.9px;height:21.500px">Aktif</div>
<div class="row" style="top:430px;height:32px;background:#f9f9f9;border-top:1px solid #dedede;"></div>
<div class="cb s" style="left:426px;top:435.7px"></div>
<div class="td" style="left:465px;top:436.4px;letter-spacing:0.09px;">M17357</div>
<div class="td" style="left:528px;top:436.4px;font-size:10.800px;letter-spacing:0.08px;word-spacing:-0.08px;">ABC MAKİNA</div>
<div class="td" style="left:787px;top:436.4px;letter-spacing:-0.05px;">30</div>
<div class="td" style="left:837px;top:436.4px;letter-spacing:0.03px;">Potansivel</div>
<div class="td" style="left:982px;top:436.4px;letter-spacing:0.04px;word-spacing:-0.04px;">Bilisim ve</div>
<div class="td" style="left:1152px;top:436.4px;letter-spacing:-1.07px;">B</div>
<div class="td tdr" style="left:1014.5px;width:120px;top:436.4px">3.400.00</div>
<div class="td tdr" style="left:1221.3px;width:120px;top:436.4px">5.000.00</div>
<div class="td tdr" style="left:1307.3px;width:120px;top:436.4px">1.600.00</div>
<div class="akt" style="top:435.3px;height:21.500px">Aktif</div>
<div class="row" style="top:462px;height:32px;background:#fff;border-top:1px solid #dedede;"></div>
<div class="cb s" style="left:426px;top:467.1px"></div>
<div class="td" style="left:465px;top:467.8px;letter-spacing:0.09px;">M17354</div>
<div class="td" style="left:528px;top:467.8px;letter-spacing:-0.18px;word-spacing:0.18px;">sözer ısı</div>
<div class="td" style="left:621px;top:467.8px;letter-spacing:-0.18px;word-spacing:0.18px;">sözer ısı</div>
<div class="td" style="left:787px;top:467.8px;letter-spacing:-0.05px;">30</div>
<div class="td" style="left:837px;top:467.8px;letter-spacing:0.03px;">Potansivel</div>
<div class="td" style="left:917px;top:467.8px;letter-spacing:0.03px;">özer</div>
<div class="td" style="left:982px;top:467.8px;letter-spacing:0.04px;word-spacing:-0.04px;">Bilisim ve</div>
<div class="td tdr" style="left:1014.5px;width:120px;top:467.8px">0.00</div>
<div class="td tdr" style="left:1221.3px;width:120px;top:467.8px">0.00</div>
<div class="td tdr" style="left:1307.3px;width:120px;top:467.8px">0.00</div>
<div class="akt" style="top:466.7px;height:21.500px">Aktif</div>
<div class="abs" style="left:417px;top:493px;width:1239px;height:2px;background:#d2d2d2"></div>
<div class="abs" style="left:417px;top:495px;width:1239px;height:8px;background:#fafafa"></div>
<div class="abs" style="left:425px;top:508px;white-space:nowrap;font-size:11px;line-height:16px;font-style:italic;font-weight:bold;color:#8a8a8a;letter-spacing:.09px">Toplam <span style="color:#2f6da8">7928</span> Kayıt Gösterilen <span style="color:#222">7851</span> ile <span style="color:#222">7860</span></div>
<div class="t" style="left:1205.5px;top:507px;font-size:10px;color:#333;letter-spacing:-0.38px;word-spacing:0.38px;">Sayfa No :</div>
<div class="inp" style="left:1252px;top:504px;width:43px;height:22px;border-color:#9a9aa8;border-radius:2px"></div>
<div class="btn" style="left:1298px;top:501px;width:33px;height:28px;border-radius:2px"><svg class="abs" style="left:10px;top:9px" width="11" height="11" viewBox="0 0 11 11"><circle cx="4.400" cy="4.400" r="3.300" fill="none" stroke="#222" stroke-width="1.500"/><path d="M6.900 6.900 L10.300 10.300" stroke="#222" stroke-width="1.800"/><path d="M2.800 4.400h3.200M4.400 2.800v3.200" stroke="#222" stroke-width="1"/></svg></div>
<div class="btn" style="left:1340px;top:501px;width:37px;height:28px;border-radius:2px"><svg class="abs" style="left:9px;top:10px" width="20" height="10" viewBox="0 0 20 10"><circle cx="4.500" cy="5" r="3" fill="none" stroke="#222" stroke-width="2.400" stroke-dasharray="1.600 0.750"/><circle cx="4.500" cy="5" r="2.400" fill="none" stroke="#222" stroke-width="1.600"/><path d="M11.500 6.500 L14 3.800 L16.500 6.500z" fill="#222"/></svg></div>
<div class="btn" style="left:1386px;top:501px;width:58px;height:28px;border-color:#c6c6c6"><svg class="abs" style="left:45px;top:11px" width="9" height="6" viewBox="0 0 9 6"><path d="M1 1 L4.500 4.600 L8 1" fill="none" stroke="#444" stroke-width="1.300"/></svg></div>
<div class="t" style="left:1398px;top:508px;color:#555;font-size:11.5px;letter-spacing:-0.60px;">10</div>
<div class="btn" style="left:1453px;top:501px;width:29px;height:29px"><svg class="abs" style="left:10px;top:11px" width="8" height="7" viewBox="0 0 8 7"><path d="M3.600 0.500 L0.800 3.500 L3.600 6.500 M7 0.500 L4.200 3.500 L7 6.500" fill="none" stroke="#333" stroke-width="1.100"/></svg></div>
<div class="btn" style="left:1482px;top:501px;width:31px;height:29px;background:#e4e4e4;border-color:#b0b0b0"><svg class="abs" style="left:11px;top:8px" width="8" height="12" viewBox="0 0 8 12"><path d="M6.500 1.200 L2 6 L6.500 10.800" fill="none" stroke="#111" stroke-width="2.200"/></svg></div>
<div class="btn" style="left:1515px;top:501px;width:72px;height:29px;border-color:#e3e3e3"></div>
<div class="t" style="left:1527px;top:508px;color:#bdbdbd;letter-spacing:-0.28px;word-spacing:0.28px;">786 / 793</div>
<div class="btn" style="left:1587px;top:501px;width:31px;height:29px"><svg class="abs" style="left:11px;top:8px" width="8" height="12" viewBox="0 0 8 12"><path d="M1.500 1.200 L6 6 L1.500 10.800" fill="none" stroke="#111" stroke-width="2.200"/></svg></div>
<div class="btn" style="left:1618px;top:501px;width:29px;height:29px"><svg class="abs" style="left:10px;top:11px" width="8" height="7" viewBox="0 0 8 7"><path d="M1 0.500 L3.800 3.500 L1 6.500 M4.400 0.500 L7.200 3.500 L4.400 6.500" fill="none" stroke="#333" stroke-width="1.100"/></svg></div>
</body></html>
